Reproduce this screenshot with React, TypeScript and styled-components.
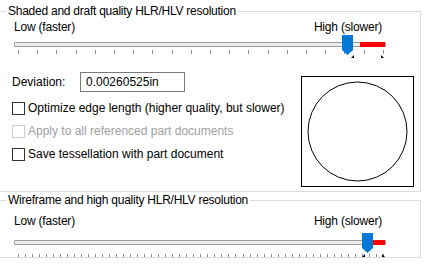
import React from "react";
import styled, { createGlobalStyle } from "styled-components";

const GlobalStyle = createGlobalStyle`
  html, body {
    margin: 0;
    padding: 0;
    background: #fff;
  }
  body {
    font-family: "Liberation Sans", Arial, sans-serif;
    font-size: 12px;
    line-height: 15px;
    color: #000;
  }
`;

const Page = styled.div`
  width: 442px;
  height: 268px;
  overflow: hidden;
  box-sizing: border-box;
  padding-top: 4px;
  background: #fff;
`;

const Group = styled.fieldset<{ $gap?: number }>`
  margin: ${(p) => p.$gap ?? 0}px 0 0 -1px;
  width: 422px;
  min-width: 0;
  box-sizing: border-box;
  padding: 0 0 4px;
  border: 1px solid #dcdcdc;
`;

const Legend = styled.legend`
  margin-left: 6px;
  padding: 0 2px;
  line-height: 15px;
  letter-spacing: -0.25px;
`;

/* ---------- slider ---------- */

const SliderWrap = styled.div<{ $top: number }>`
  width: 372px;
  margin: ${(p) => p.$top}px 0 0 14px;
`;

const SliderLabels = styled.div<{ $gap: number }>`
  display: flex;
  justify-content: space-between;
  padding-right: 4px;
  margin-bottom: ${(p) => p.$gap}px;
  letter-spacing: -0.2px;
`;

const TrackArea = styled.div`
  position: relative;
  height: 20px;
  box-sizing: border-box;
  padding-top: 7px;
`;

const Track = styled.div`
  height: 5px;
  box-sizing: border-box;
  border: 1px solid #9a9a9a;
  border-radius: 1px;
  background: #ececec;
`;

const Selection = styled.div`
  position: absolute;
  top: 7px;
  height: 5px;
  background: #ff0000;
`;

const Ticks = styled.div<{ $top: number; $h: number }>`
  position: absolute;
  left: 4px;
  width: 366px;
  top: ${(p) => p.$top}px;
  height: ${(p) => p.$h}px;
  display: flex;
  justify-content: space-between;
`;

const Tick = styled.span`
  width: 1px;
  height: 100%;
  background: #8e8e8e;
`;

const Marker = styled.svg`
  position: absolute;
  width: 4px;
  height: 4px;
`;

const Thumb = styled.svg`
  position: absolute;
  top: 0;
  width: 11px;
  height: 20px;
`;

type SliderProps = {
  top: number;
  labelGap: number;
  thumb: number;
  selFrom: number;
  selTo: number;
  ticks: number;
  tickTop: number;
  tickH: number;
  markerTop: number;
  markers: [number, number];
};

function Slider(p: SliderProps) {
  return (
    <SliderWrap $top={p.top}>
      <SliderLabels $gap={p.labelGap}>
        <span>Low (faster)</span>
        <span>High (slower)</span>
      </SliderLabels>
      <TrackArea>
        <Track />
        <Selection style={{ left: p.selFrom, width: p.selTo - p.selFrom }} />
        <Ticks $top={p.tickTop} $h={p.tickH}>
          {Array.from({ length: p.ticks }, (_, i) => (
            <Tick key={i} />
          ))}
        </Ticks>
        <Marker viewBox="0 0 4 4" style={{ left: p.markers[0], top: p.markerTop }}>
          <path d="M3 0 V3 H0 Z" fill="#000" />
        </Marker>
        <Marker viewBox="0 0 4 4" style={{ left: p.markers[1], top: p.markerTop }}>
          <path d="M0 0 V3 H3 Z" fill="#000" />
        </Marker>
        <Thumb viewBox="0 0 11 20" style={{ left: p.thumb }}>
          <path d="M0 0 H11 V15 L5.5 20 L0 15 Z" fill="#0078d7" />
        </Thumb>
      </TrackArea>
    </SliderWrap>
  );
}

/* ---------- body ---------- */

const Body = styled.div`
  display: flex;
  justify-content: space-between;
  align-items: flex-start;
  margin-top: 17px;
  padding: 0 6px 0 12px;
`;

const Options = styled.div`
  display: flex;
  flex-direction: column;
`;

const FieldRow = styled.div`
  display: flex;
  align-items: center;
  height: 20px;
  margin-bottom: 5px;
`;

const FieldLabel = styled.label`
  width: 68px;
`;

const TextBox = styled.div`
  width: 105px;
  height: 20px;
  box-sizing: border-box;
  border: 1px solid #7a7a7a;
  padding: 1px 5px;
  line-height: 16px;
`;

const CheckRow = styled.label<{ $disabled?: boolean }>`
  display: flex;
  align-items: center;
  gap: 3px;
  height: 23px;
  color: ${(p) => (p.$disabled ? "#a0a0a0" : "#000")};
`;

const Box = styled.span<{ $disabled?: boolean }>`
  width: 13px;
  height: 13px;
  box-sizing: border-box;
  border: 1px solid ${(p) => (p.$disabled ? "#cccccc" : "#333333")};
  background: #fff;
`;

const Preview = styled.div`
  width: 113px;
  height: 111px;
  margin-top: 4px;
  box-sizing: border-box;
  border: 1px solid #000;
`;

function Check({ label, disabled }: { label: string; disabled?: boolean }) {
  return (
    <CheckRow $disabled={disabled}>
      <Box $disabled={disabled} />
      {label}
    </CheckRow>
  );
}

export default function App() {
  return (
    <Page>
      <GlobalStyle />
      <Group>
        <Legend>Shaded and draft quality HLR/HLV resolution</Legend>
        <Slider
          top={1}
          labelGap={0}
          thumb={328}
          selFrom={346}
          selTo={371}
          ticks={20}
          tickTop={15}
          tickH={4}
          markerTop={20}
          markers={[337, 367]}
        />
        <Body>
          <Options>
            <FieldRow>
              <FieldLabel>Deviation:</FieldLabel>
              <TextBox>0.00260525in</TextBox>
            </FieldRow>
            <Check label="Optimize edge length (higher quality, but slower)" />
            <Check label="Apply to all referenced part documents" disabled />
            <Check label="Save tessellation with part document" />
          </Options>
          <Preview>
            <svg width="111" height="109" viewBox="0 0 111 109">
              <circle cx="55.5" cy="54.5" r="49.5" fill="none" stroke="#000" strokeWidth="1" />
            </svg>
          </Preview>
        </Body>
      </Group>
      <Group $gap={1}>
        <Legend>Wireframe and high quality HLR/HLV resolution</Legend>
        <Slider
          top={6}
          labelGap={4}
          thumb={348}
          selFrom={358}
          selTo={371}
          ticks={53}
          tickTop={21}
          tickH={3}
          markerTop={21}
          markers={[348, 368]}
        />
      </Group>
    </Page>
  );
}
